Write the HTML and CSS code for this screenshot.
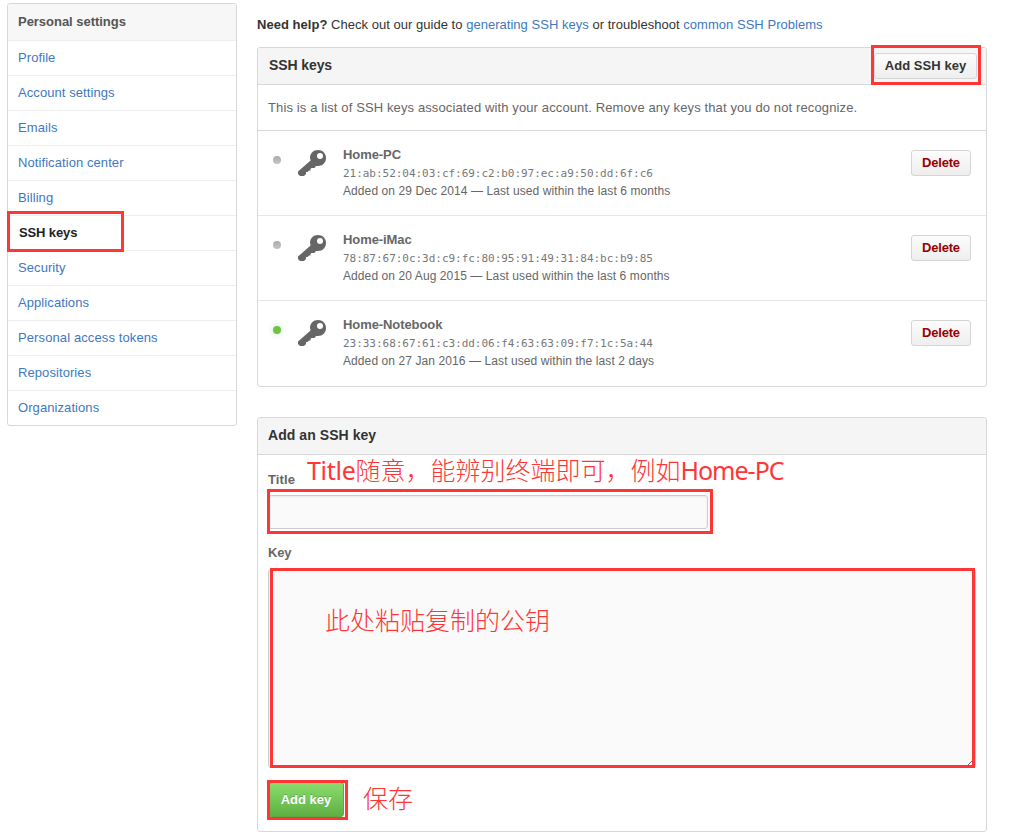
FILE: index.html
```html
<!DOCTYPE html>
<html lang="en">
<head>
<meta charset="utf-8">
<title>SSH keys</title>
<link rel="stylesheet" href="styles.css">
</head>
<body>
<svg class="sprite" width="0" height="0" aria-hidden="true">
  <symbol id="key" viewBox="0 0 28 26">
    <path fill-rule="evenodd" d="M20 0C24.600 0 28 3.500 28 8S24.600 16 20 16L18 15.900L16.500 18H13.500L12.500 19V20.500H11L9.500 22H8V24L6 26H2L0 24V21.500L12.600 10.500L12 8C12 3.500 15.400 0 20 0ZM22 3A3 3 0 1 0 22 9A3 3 0 1 0 22 3Z"/>
  </symbol>
</svg>
<div class="page">
  <nav class="menu">
    <h3 class="menu-heading">Personal settings</h3>
    <a class="menu-item">Profile</a>
    <a class="menu-item">Account settings</a>
    <a class="menu-item">Emails</a>
    <a class="menu-item">Notification center</a>
    <a class="menu-item">Billing</a>
    <a class="menu-item selected">SSH keys<span class="mark mark-menu"></span></a>
    <a class="menu-item">Security</a>
    <a class="menu-item">Applications</a>
    <a class="menu-item menu-item-wide">Personal access tokens</a>
    <a class="menu-item">Repositories</a>
    <a class="menu-item">Organizations</a>
  </nav>
  <main class="content">
    <p class="help"><strong>Need help?</strong> Check out our guide to <a>generating SSH keys</a> or troubleshoot <a>common SSH Problems</a></p>
    <section class="box">
      <header class="box-header"><h3 class="list-heading">SSH keys</h3><span class="btn btn-add">Add SSH key<span class="mark mark-add"></span></span></header>
      <p class="intro"><span>This is a list of SSH keys associated with your account. Remove any keys that you do not recognize.</span></p>
      <ul class="keys">
        <li class="key-row">
          <span class="dot"></span><svg class="key-icon"><use href="#key"/></svg>
          <div class="key-info"><strong class="key-name">Home-PC</strong><code>21:ab:52:04:03:cf:69:c2:b0:97:ec:a9:50:dd:6f:c6</code><span class="key-date">Added on 29 Dec 2014 — Last used within the last 6 months</span></div>
          <span class="btn btn-delete">Delete</span>
        </li>
        <li class="key-row">
          <span class="dot"></span><svg class="key-icon"><use href="#key"/></svg>
          <div class="key-info"><strong class="key-name">Home-iMac</strong><code>78:87:67:0c:3d:c9:fc:80:95:91:49:31:84:bc:b9:85</code><span class="key-date">Added on 20 Aug 2015 — Last used within the last 6 months</span></div>
          <span class="btn btn-delete">Delete</span>
        </li>
        <li class="key-row">
          <span class="dot dot-on"></span><svg class="key-icon"><use href="#key"/></svg>
          <div class="key-info"><strong class="key-name">Home-Notebook</strong><code>23:33:68:67:61:c3:dd:06:f4:63:63:09:f7:1c:5a:44</code><span class="key-date">Added on 27 Jan 2016 — Last used within the last 2 days</span></div>
          <span class="btn btn-delete">Delete</span>
        </li>
      </ul>
    </section>
    <section class="box box-form">
      <header class="box-header"><h3>Add an SSH key</h3></header>
      <form class="form">
        <div class="label-row"><label>Title</label><span class="note note-title" lang="zh-CN"><span class="note-word">Title</span>随意，能辨别终端即可，例如<span class="note-word note-host">Home-PC</span></span></div>
        <div class="field field-title"><input type="text"><span class="mark mark-title"></span></div>
        <label class="label-key">Key</label>
        <div class="field field-key"><textarea></textarea><span class="note note-key" lang="zh-CN">此处粘贴复制的公钥</span><span class="mark mark-key"></span></div>
        <div class="actions"><span class="btn-green">Add key<span class="mark mark-save"></span></span><span class="note note-save" lang="zh-CN">保存</span></div>
      </form>
    </section>
  </main>
</div>
</body>
</html>
```
FILE: styles.css
```css
* { box-sizing: border-box; }
body {
  margin: 0;
  background: #fff;
  color: #333;
  font: 13px/18px "Liberation Sans", Arial, sans-serif;
}
h3, p, ul { margin: 0; padding: 0; }
h3 { font-size: 13px; }
.sprite { position: absolute; }
.page { display: flex; align-items: flex-start; gap: 20px; padding: 3px 0 0 7px; white-space: nowrap; height: 837px; overflow: hidden; }

.menu { width: 230px; border: 1px solid #d8d8d8; border-radius: 3px; }
.menu-heading { height: 36px; padding: 0 10px; line-height: 35px; background: #f7f7f7; color: #555; border-radius: 2px 2px 0 0; letter-spacing: -.03px; }
.menu-item { display: block; position: relative; height: 35px; padding: 0 10px; line-height: 33px; border-top: 1px solid #eee; color: #4078c0; letter-spacing: .08px; }
.menu-item-wide { letter-spacing: .11px; }
.menu-item.selected { z-index: 1; color: #222; font-weight: bold; padding-left: 11px; letter-spacing: -.12px; }

.mark { position: absolute; border: 3px solid #ff3636; pointer-events: none; }
.mark-menu { left: -1px; top: -5px; width: 117px; height: 41px; }
.mark-add { left: -4px; top: -9px; width: 110px; height: 40px; }
.mark-title { left: -1px; top: -6px; width: 446px; height: 45px; }
.mark-key { left: 2px; top: -1px; width: 705px; height: 200px; }
.mark-save { left: -2px; top: -3px; width: 81px; height: 40px; }

.content { width: 730px; }
.help { height: 44px; padding-top: 13px; letter-spacing: .03px; }
.help a { color: #4078c0; }
.box { border: 1px solid #d8d8d8; border-radius: 3px; }
.box-header { display: flex; justify-content: space-between; height: 37px; padding: 0 9px 0 10px; background: #f5f5f5; border-bottom: 1px solid #d8d8d8; border-radius: 2px 2px 0 0; line-height: 35px; }
.box-header h3 { font-size: 14px; letter-spacing: .06px; }
.box-header .list-heading { padding-left: 1px; letter-spacing: -.1px; }
.btn { position: relative; height: 26px; border: 1px solid #d5d5d5; border-radius: 3px; background: linear-gradient(#fcfcfc, #eee); font-weight: bold; line-height: 23px; text-align: center; }
.btn-add { width: 103px; margin-top: 5px; letter-spacing: .05px; }
.btn-delete { width: 60px; margin-left: auto; margin-top: 3px; color: #900; letter-spacing: -.2px; }
.intro { height: 46px; padding: 14px 10px 0; border-bottom: 1px solid #d8d8d8; color: #666; letter-spacing: .12px; }
.keys { list-style: none; }
.key-row { display: flex; align-items: flex-start; height: 85px; padding: 16px 15px 0; border-bottom: 1px solid #e5e5e5; color: #666; }
.key-row:last-child { border-bottom: 0; }
.dot { width: 8px; height: 8px; margin-top: 9px; border-radius: 50%; background: linear-gradient(#aaa, #c4c4c4); }
.dot-on { background: #6cc644; box-shadow: 0 0 6px rgba(108, 198, 68, .45); }
.key-icon { width: 28px; height: 26px; margin: 3px 17px 0; fill: #666; }
.key-info { display: flex; flex-direction: column; align-items: flex-start; }
.key-name { line-height: 15px; letter-spacing: -.08px; }
code { font: 11px/15px "DejaVu Sans Mono", monospace; margin-top: 4px; color: #777; letter-spacing: -.03px; }
.key-date { font-size: 12px; line-height: 15px; margin-top: 3px; letter-spacing: .09px; }

.box-form { margin-top: 30px; height: 415px; }
.form { padding: 0 10px; }
label { color: #666; font-weight: bold; }
.label-row { display: flex; gap: 12px; height: 40px; }
.label-row label { width: 27px; padding-top: 16px; letter-spacing: .1px; }
.note { color: #ff3636; font: 300 25px/32px "Noto Sans CJK SC", sans-serif; }
.note-word { font-family: "Noto Sans", sans-serif; font-weight: 400; letter-spacing: -.3px; }
.note-host { letter-spacing: -1px; }
.note-title { margin-top: -2px; }
.field { position: relative; }
.field-title { height: 34px; }
input { display: block; width: 440px; height: 34px; margin: 0; background: #fafafa; border: 1px solid #ccc; border-radius: 3px; box-shadow: inset 0 1px 2px rgba(0, 0, 0, .075); }
.label-key { display: block; height: 40px; padding-top: 15px; letter-spacing: -.2px; }
.field-key { height: 199px; }
textarea { display: block; width: 708px; height: 199px; margin: 0; background: #fafafa; border: 1px solid #ccc; border-radius: 3px; resize: vertical; }
.note-key { position: absolute; left: 57px; top: 34px; }
.actions { display: flex; align-items: flex-start; padding-top: 14px; }
.btn-green { position: relative; width: 76px; height: 35px; border: 1px solid #5ca941; border-radius: 3px; background: linear-gradient(#8add6d, #60b044); color: #fff; font-weight: bold; line-height: 33px; text-align: center; text-shadow: 0 -1px 0 rgba(0, 0, 0, .2); }
.note-save { margin: -1px 0 0 19px; }
```
